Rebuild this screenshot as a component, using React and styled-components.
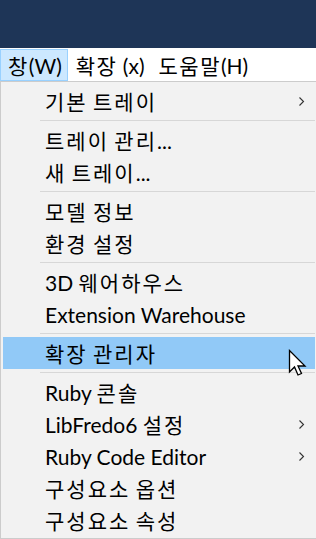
import styled, { createGlobalStyle } from "styled-components";

const GlobalStyle = createGlobalStyle`
  html, body {
    margin: 0;
    padding: 0;
    background: #f2f2f2;
  }
  body {
    font-family: Lato, "Noto Sans CJK KR", sans-serif;
    color: #000;
  }
`;

const Window = styled.div`
  width: 316px;
  height: 539px;
  overflow: hidden;
  display: flex;
  flex-direction: column;
  position: relative;
`;

const TitleBar = styled.div`
  height: 48px;
  background: #1e3557;
  flex-shrink: 0;
`;

const MenuBar = styled.div`
  height: 33px;
  background: #fff;
  display: flex;
  align-items: stretch;
  flex-shrink: 0;
  box-sizing: border-box;
  padding-top: 1px;
`;

const MenuBarItem = styled.div`
  display: flex;
  align-items: center;
  padding: 0 5px 0 7px;
  font-size: 21px;
  border: 1px solid ${(p) => (p.$active ? "#99d1ff" : "transparent")};
  background: ${(p) => (p.$active ? "#cce8ff" : "transparent")};
  white-space: nowrap;
`;

const Dropdown = styled.div`
  flex: 1;
  background: #f2f2f2;
  border-top: 1px solid #cccccc;
  border-left: 1px solid #cccccc;
  border-bottom: 1px solid #cccccc;
  padding: 3px 1px 1px 2px;
  display: flex;
  flex-direction: column;
  box-sizing: border-box;
`;

const Item = styled.div`
  height: 32px;
  flex-shrink: 0;
  display: flex;
  align-items: center;
  justify-content: space-between;
  padding: 0 10px 0 42px;
  font-size: 21px;
  white-space: nowrap;
  background: ${(p) => (p.$hover ? "#91c9f7" : "transparent")};
`;

// hangul runs are a touch wider in the original font
const Hangul = styled.span`
  letter-spacing: ${(p) => (p.$tight ? "1.5px" : "2px")};
`;

const Separator = styled.div`
  height: 7px;
  flex-shrink: 0;
  display: flex;
  align-items: center;
  padding-left: 37px;

  &::after {
    content: "";
    flex: 1;
    height: 1px;
    background: #d7d7d7;
  }
`;

const Chevron = () => (
  <svg width="7" height="11" viewBox="0 0 7 11">
    <polyline points="1.5,1.5 5.5,5.5 1.5,9.5" fill="none" stroke="#333" strokeWidth="1.1" />
  </svg>
);

const Cursor = styled.svg`
  position: absolute;
  left: 288px;
  top: 349px;
`;

const Label = ({ text, tight }) => (
  <span>
    {text.split(/([\uAC00-\uD7A3]+)/).map((part, i) =>
      /[\uAC00-\uD7A3]/.test(part) ? (
        <Hangul key={i} $tight={tight}>{part}</Hangul>
      ) : (
        part
      )
    )}
  </span>
);

const menu = [
  { label: "기본 트레이", sub: true },
  "-",
  { label: "트레이 관리..." },
  { label: "새 트레이..." },
  "-",
  { label: "모델 정보" },
  { label: "환경 설정" },
  "-",
  { label: "3D 웨어하우스" },
  { label: "Extension Warehouse" },
  "-",
  { label: "확장 관리자", hover: true },
  "-",
  { label: "Ruby 콘솔" },
  { label: "LibFredo6 설정", sub: true },
  { label: "Ruby Code Editor", sub: true },
  { label: "구성요소 옵션" },
  { label: "구성요소 속성" },
];

export default function App() {
  return (
    <Window>
      <GlobalStyle />
      <TitleBar />
      <MenuBar>
        <MenuBarItem $active><Label tight text="창(W)" /></MenuBarItem>
        <MenuBarItem><Label tight text="확장 (x)" /></MenuBarItem>
        <MenuBarItem><Label tight text="도움말(H)" /></MenuBarItem>
      </MenuBar>
      <Dropdown>
        {menu.map((m, i) =>
          m === "-" ? (
            <Separator key={i} />
          ) : (
            <Item key={i} $hover={m.hover}>
              <Label text={m.label} />
              {m.sub && <Chevron />}
            </Item>
          )
        )}
      </Dropdown>
      <Cursor width="19" height="28" viewBox="0 0 19 28">
        <path
          d="M1.5 1.5 L1.5 23 L6.5 18 L10 26 L13.5 24.5 L10 17 L17 17 Z"
          fill="#fff"
          stroke="#000"
          strokeWidth="1.3"
          strokeLinejoin="miter"
        />
      </Cursor>
    </Window>
  );
}
